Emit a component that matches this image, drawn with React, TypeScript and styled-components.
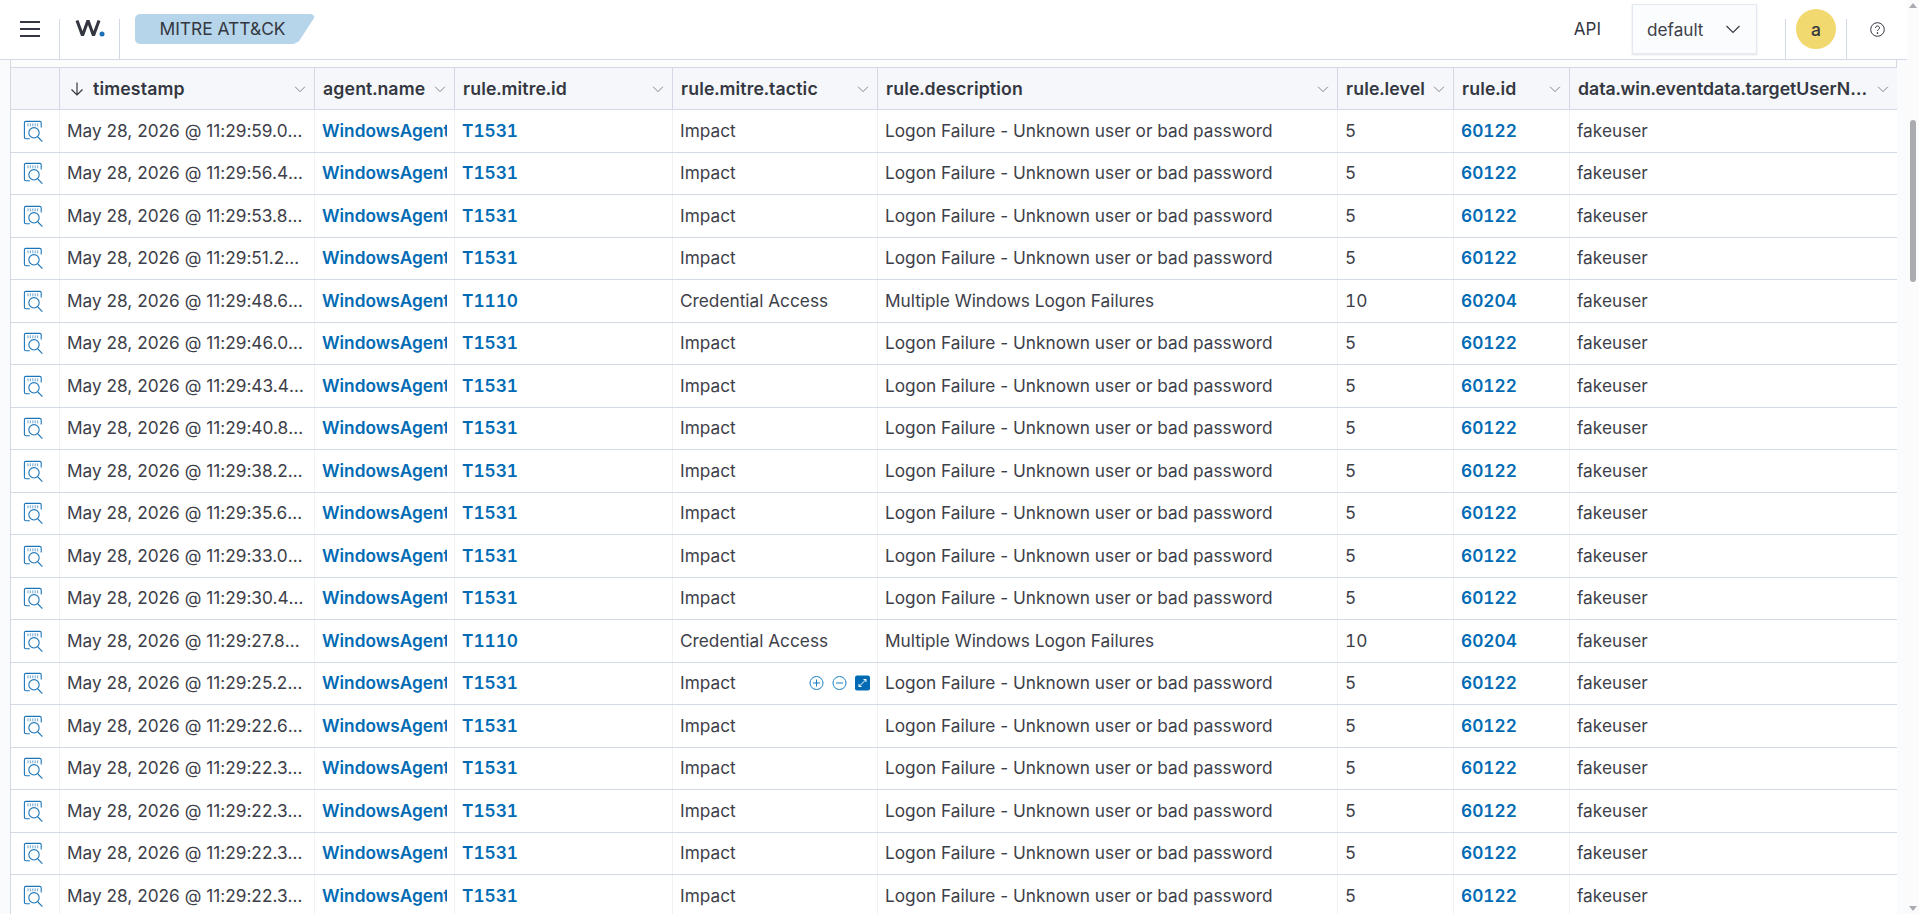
import React from "react";
import styled, { createGlobalStyle } from "styled-components";

const GlobalStyle = createGlobalStyle`
  html, body { margin: 0; padding: 0; height: 100%; overflow: hidden; background: #fafbfd; }
  body {
    font-family: Inter, "Noto Sans", "Liberation Sans", sans-serif;
    font-feature-settings: "calt" 0;
    color: #343741;
  }
  #root { height: 100%; }
`;

const Page = styled.div`
  display: flex;
  height: 914px;
  width: 1919px;
  overflow: hidden;
`;

const Main = styled.div`
  width: 1907px;
  flex: none;
  display: flex;
  flex-direction: column;
`;

const TopBar = styled.header`
  height: 59px;
  flex: none;
  display: flex;
  align-items: stretch;
  background: #fff;
  border-bottom: 1px solid #d3dae6;
`;

const TopSection = styled.div<{ $w: number; $divider?: boolean; $leftRule?: boolean }>`
  width: ${(p) => p.$w}px;
  flex: none;
  box-sizing: border-box;
  display: flex;
  align-items: center;
  justify-content: center;
  position: relative;
  ${(p) => (p.$divider ? "border-right: 1px solid #d3dae6; margin-top: 19px; padding-bottom: 19px;" : "")}
  ${(p) => (p.$leftRule ? "border-left: 1px solid #d3dae6;" : "")}
`;

const MenuIcon = styled.svg`
  position: absolute;
  top: 2px;
`;

const Logo = styled.div`
  position: absolute;
  top: 0;
  display: flex;
  align-items: baseline;
`;

const Crumb = styled.div`
  margin: 14px 0 0 15px;
  width: 180px;
  height: 30px;
  flex: none;
  background: #b6d5ea;
  border-radius: 5px;
  clip-path: polygon(0 0, 100% 0, 100% 8%, 91% 92%, 88% 100%, 0 100%);
  font-size: 17.4px;
  line-height: 30px;
  text-align: center;
  box-sizing: border-box;
  padding-right: 5px;
  color: #343741;
`;

const Spacer = styled.div`
  flex: 1;
`;

const ApiLink = styled.div`
  margin: 19px 31px 0 0;
  font-size: 17px;
  line-height: 21px;
  color: #343741;
`;

const SpaceSelect = styled.div`
  margin: 4px 28px 0 0;
  width: 125px;
  height: 50px;
  box-sizing: border-box;
  padding: 0 15px 0 14px;
  display: flex;
  align-items: center;
  justify-content: space-between;
  background: #fbfcfd;
  border: 1px solid #e4e8f0;
  box-shadow: 0 1px 2px rgba(152, 162, 179, 0.3);
  font-size: 17.2px;
  color: #3d4049;
`;

const Avatar = styled.div`
  position: absolute;
  top: -10px;
  width: 40px;
  height: 40px;
  border-radius: 50%;
  background: #f2d96f;
  display: flex;
  align-items: center;
  justify-content: center;
  font-size: 17.5px;
  font-weight: 500;
  color: #343741;
`;

const Grid = styled.div`
  margin-left: 10px;
  width: 1887px;
  display: flex;
  flex-direction: column;
  border-left: 1px solid #d3dae6;
  box-sizing: border-box;
`;

const Strip = styled.div`
  height: 7px;
  background: #fcfcfd;
  border-right: 1px solid #d3dae6;
`;

const widths = [49, 255, 140, 218, 205, 460, 116, 116, 327];
const template = widths.map((w) => `${w}px`).join(" ");

const HeaderRow = styled.div`
  display: grid;
  grid-template-columns: ${template};
  height: 41px;
  background: #f5f7fa;
  border-top: 1px solid #d3dae6;
  border-bottom: 1px solid #d3dae6;
`;

const HeaderCell = styled.div`
  display: flex;
  align-items: center;
  gap: 6px;
  padding: 0 8px;
  min-width: 0;
  border-right: 1px solid #d3dae6;
  box-sizing: border-box;
  font-size: 17.7px;
  font-weight: 600;
  font-feature-settings: "tnum" 1, "calt" 0;
  letter-spacing: 0.15px;
  color: #343741;
  &:last-child { border-right: none; letter-spacing: 0; }
`;

const HeaderLabel = styled.span`
  flex: 1;
  white-space: nowrap;
  overflow: hidden;
  text-overflow: ellipsis;
  min-width: 0;
`;

const SortArrow = styled.svg`
  flex: none;
  margin-left: 1px;
  margin-right: 2px;
`;

const Row = styled.div`
  display: grid;
  grid-template-columns: ${template};
  height: 42.5px;
  box-sizing: border-box;
  background: #fff;
  border-bottom: 1px solid #d3dae6;
  flex: none;
`;

const Cell = styled.div<{ $link?: boolean; $num?: boolean }>`
  position: relative;
  display: flex;
  align-items: center;
  padding: 0 7px 1px;
  min-width: 0;
  border-right: 1px solid #eef1f6;
  box-sizing: border-box;
  font-size: 17.25px;
  font-weight: ${(p) => (p.$link ? 600 : 400)};
  font-feature-settings: ${(p) => (p.$num ? '"tnum" 1, "calt" 0' : '"calt" 0')};
  color: ${(p) => (p.$link ? "#006bb4" : "#3d4049")};
  white-space: nowrap;
  &:last-child { border-right: none; }
`;

const CellText = styled.span<{ $clip?: boolean }>`
  display: block;
  min-width: 0;
  overflow: hidden;
  text-overflow: ${(p) => (p.$clip ? "clip" : "ellipsis")};
`;

const IconCell = styled(Cell)`
  justify-content: center;
  padding: 0 2px 0 0;
`;

const CellActions = styled.div`
  position: absolute;
  right: 7px;
  top: 50%;
  transform: translateY(-50%);
  display: flex;
  align-items: center;
  gap: 8px;
`;

const ExpandButton = styled.div`
  width: 15px;
  height: 15px;
  border-radius: 2px;
  background: #006bb4;
  display: flex;
  align-items: center;
  justify-content: center;
`;

const ScrollTrack = styled.div`
  width: 12px;
  flex: none;
  position: relative;
  background: #fbfbfc;
`;

const ScrollThumb = styled.div`
  position: absolute;
  top: 120px;
  left: 3px;
  width: 6px;
  height: 162px;
  border-radius: 3px;
  background: #a9abb0;
`;

const ArrowUp = styled.div`
  position: absolute;
  top: 3px;
  left: 2px;
  width: 0;
  height: 0;
  border-left: 4px solid transparent;
  border-right: 4px solid transparent;
  border-bottom: 5px solid #a9abb0;
`;

const ArrowDown = styled.div`
  position: absolute;
  bottom: 3px;
  left: 2px;
  width: 0;
  height: 0;
  border-left: 4px solid transparent;
  border-right: 4px solid transparent;
  border-top: 5px solid #a9abb0;
`;

const ChevronSvg = styled.svg`
  flex: none;
`;

const Chevron = ({ size = 12, color = "#343741" }: { size?: number; color?: string }) => (
  <ChevronSvg width={size} height={size} viewBox="0 0 16 16" fill="none">
    <path d="M1.5 5l6.5 6.5L14.500 5" stroke={color} strokeWidth="1.100" />
  </ChevronSvg>
);

const InspectIcon = () => (
  <svg width="24" height="24" viewBox="0 0 20 20" fill="none" stroke="#1a75b9" strokeWidth="0.900">
    <path d="M6.500 16.500H3.200c-.8 0-1.200-.5-1.200-1.200V3.200C2 2.500 2.500 2 3.200 2h11.600c.7 0 1.200.5 1.200 1.200V7" />
    <path d="M4.500 4.300h9M4.500 5.600h9" strokeDasharray="1 1" opacity=".7" />
    <circle cx="10" cy="11.500" r="4.300" />
    <path d="M13.200 15l3.800 3.800" />
  </svg>
);

const CirclePlus = () => (
  <svg width="15" height="15" viewBox="0 0 15 15" fill="none" stroke="#1b7fc4" strokeWidth="1">
    <circle cx="7.500" cy="7.500" r="6.500" />
    <path d="M7.500 4v7M4 7.500h7" />
  </svg>
);

const CircleMinus = () => (
  <svg width="15" height="15" viewBox="0 0 15 15" fill="none" stroke="#1b7fc4" strokeWidth="1">
    <circle cx="7.500" cy="7.500" r="6.500" />
    <path d="M4 7.500h7" />
  </svg>
);

const columns = [
  "",
  "timestamp",
  "agent.name",
  "rule.mitre.id",
  "rule.mitre.tactic",
  "rule.description",
  "rule.level",
  "rule.id",
  "data.win.eventdata.targetUserName",
];

const F = "Logon Failure - Unknown user or bad password";
const M = "Multiple Windows Logon Failures";

const stamps = [
  "59.0", "56.4", "53.8", "51.2", "48.6", "46.0", "43.4", "40.8", "38.2", "35.6",
  "33.0", "30.4", "27.8", "25.2", "22.6", "22.3", "22.3", "22.3", "22.3", "22.3", "22.3",
];

const App = () => (
  <Page>
    <GlobalStyle />
    <Main>
      <TopBar>
        <TopSection $w={60} $divider>
          <MenuIcon width="20" height="16" viewBox="0 0 20 16">
            <path d="M0 1h20M0 8h20M0 15h20" stroke="#343741" strokeWidth="2" />
          </MenuIcon>
        </TopSection>
        <TopSection $w={60} $divider>
          <Logo>
            <svg width="30" height="20" viewBox="0 0 30 20">
              <path d="M2 1.500l5.500 15 5.500-15 5.500 15 5.500-15" fill="none" stroke="#343741" strokeWidth="3.100" strokeLinejoin="bevel" />
              <circle cx="27" cy="15" r="2.500" fill="#1b70b8" />
            </svg>
          </Logo>
        </TopSection>
        <Crumb>MITRE ATT&amp;CK</Crumb>
        <Spacer />
        <ApiLink>API</ApiLink>
        <SpaceSelect>
          default
          <Chevron size={16} />
        </SpaceSelect>
        <TopSection $w={62} $divider $leftRule>
          <Avatar>a</Avatar>
        </TopSection>
        <TopSection $w={60}>
          <svg width="15" height="15" viewBox="0 0 15 15" fill="none" stroke="#343741">
            <circle cx="7.500" cy="7.500" r="6.800" />
            <path d="M5.500 6c0-2.700 4-2.700 4 0 0 1.500-2 1.500-2 3" />
            <circle cx="7.500" cy="11" r=".5" fill="#343741" />
          </svg>
        </TopSection>
      </TopBar>
      <Grid>
        <Strip />
        <HeaderRow>
          {columns.map((c, i) => (
            <HeaderCell key={i}>
              {i === 1 && (
                <SortArrow width="16" height="16" viewBox="0 0 16 16" fill="none" stroke="#343741" strokeWidth="1.200">
                  <path d="M8 1.500v12.500M2.500 8.500L8 14l5.500-5.500" />
                </SortArrow>
              )}
              {c && <HeaderLabel>{c}</HeaderLabel>}
              {c && <Chevron size={12} color="#69707d" />}
            </HeaderCell>
          ))}
        </HeaderRow>
        {stamps.map((s, i) => {
          const multi = i === 4 || i === 12;
          return (
            <Row key={i}>
              <IconCell>
                <InspectIcon />
              </IconCell>
              <Cell>
                <CellText>{`May 28, 2026 @ 11:29:${s}8888`}</CellText>
              </Cell>
              <Cell $link>
                <CellText $clip>WindowsAgent</CellText>
              </Cell>
              <Cell $link $num>
                <CellText>{multi ? "T1110" : "T1531"}</CellText>
              </Cell>
              <Cell>
                <CellText>{multi ? "Credential Access" : "Impact"}</CellText>
                {i === 13 && (
                  <CellActions>
                    <CirclePlus />
                    <CircleMinus />
                    <ExpandButton>
                      <svg width="9" height="9" viewBox="0 0 9 9" fill="none" stroke="#fff" strokeWidth="1">
                        <path d="M1 8l7-7M5.500 1H8v2.500M1 5.500V8h2.500" />
                      </svg>
                    </ExpandButton>
                  </CellActions>
                )}
              </Cell>
              <Cell>
                <CellText>{multi ? M : F}</CellText>
              </Cell>
              <Cell $num>
                <CellText>{multi ? "10" : "5"}</CellText>
              </Cell>
              <Cell $link $num>
                <CellText>{multi ? "60204" : "60122"}</CellText>
              </Cell>
              <Cell>
                <CellText>fakeuser</CellText>
              </Cell>
            </Row>
          );
        })}
      </Grid>
    </Main>
    <ScrollTrack>
      <ArrowUp />
      <ScrollThumb />
      <ArrowDown />
    </ScrollTrack>
  </Page>
);

export default App;
